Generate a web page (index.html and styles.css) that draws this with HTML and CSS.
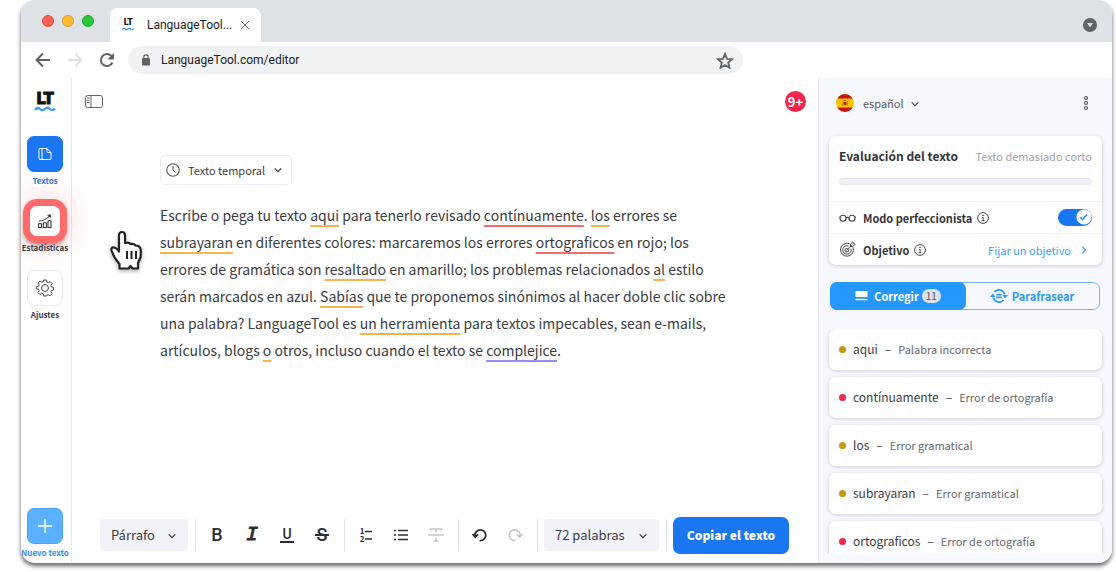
FILE: index.html
```html
<!DOCTYPE html>
<html lang="es">
<head>
<meta charset="utf-8">
<meta name="viewport" content="width=device-width, initial-scale=1">
<title>LanguageTool - Editor</title>
<link rel="stylesheet" href="styles.css">
</head>
<body>
<svg class="defs" aria-hidden="true">
  <symbol id="wave" viewBox="0 0 22 6"><path d="M1 4Q3.500.5 6 3T11 3 16 3 21 2.500" fill="none" stroke="#3b9dfd" stroke-width="2.400"/></symbol>
  <symbol id="chevron" viewBox="0 0 8 8"><path d="M.7 2.300 4 5.600 7.300 2.300" fill="none" stroke="currentColor" stroke-width="1.200"/></symbol>
  <symbol id="info" viewBox="0 0 12 12"><circle cx="6" cy="6" r="5.400" fill="none" stroke="currentColor" stroke-width=".9"/><circle cx="6" cy="3.500" r=".8" fill="currentColor"/><path d="M5 5.500h1.200v3M4.700 8.700h2.800" fill="none" stroke="currentColor" stroke-width=".9"/></symbol>
</svg>
<div class="window">
  <header class="tabbar">
    <div class="lights"><span class="light red"></span><span class="light amber"></span><span class="light green"></span></div>
    <div class="tab">
      <span class="logo small">LT<svg><use href="#wave"/></svg></span>
      <span class="tab-title">LanguageTool...</span>
      <button class="plain" aria-label="Cerrar pestaña"><svg width="10" height="10" viewBox="0 0 10 10"><path d="m1 1 8 8M9 1 1 9" fill="none" stroke="#5f6368"/></svg></button>
    </div>
    <button class="plain tab-search" aria-label="Buscar pestañas"><svg width="14" height="14" viewBox="0 0 14 14"><circle cx="7" cy="7" r="7" fill="#5f6368"/><path d="M4 5h6L7 9.500z" fill="#dee1e6"/></svg></button>
  </header>
  <nav class="navbar" aria-label="Navegador">
    <div class="nav-buttons">
      <button class="plain" aria-label="Atrás"><svg width="16" height="16" viewBox="0 0 16 16"><path d="M15 8H2M8 1.500 1.500 8 8 14.500" fill="none" stroke="#5f6368" stroke-width="2"/></svg></button>
      <button class="plain" aria-label="Adelante"><svg width="16" height="16" viewBox="0 0 16 16"><path d="M1 8h13M8 1.500 14.500 8 8 14.500" fill="none" stroke="#dfe1e5" stroke-width="2"/></svg></button>
      <button class="plain" aria-label="Recargar"><svg width="16" height="16" viewBox="0 0 16 16"><path d="M13.400 10.500A6 6 0 1 1 12.300 4l1.200 1.500" fill="none" stroke="#5f6368" stroke-width="2"/><path d="M15 1v6.500H8.500z" fill="#5f6368"/></svg></button>
    </div>
    <div class="address">
      <svg width="10" height="12" viewBox="0 0 10 12"><rect x="1" y="4" width="8" height="7.500" rx="1" fill="#5f6368"/><path d="M2.800 4.500V3a2.200 2.200 0 0 1 4.400 0v1.500" fill="none" stroke="#5f6368" stroke-width="1.200"/></svg>
      <input type="text" value="LanguageTool.com/editor" aria-label="Dirección">
      <button class="plain" aria-label="Guardar en favoritos"><svg width="18" height="17" viewBox="0 0 18 17"><path d="m9 1.800 2 5 5.200.4-4 3.400 1.300 5.200L9 13l-4.500 2.800 1.300-5.200-4-3.400 5.200-.4z" fill="none" stroke="#5f6368" stroke-width="1.800"/></svg></button>
    </div>
  </nav>
  <div class="app">
    <aside class="rail">
      <span class="logo">LT<svg><use href="#wave"/></svg></span>
      <button class="rail-item active"><span class="tile"><svg width="14" height="14" viewBox="0 0 14 14"><path d="M4 1.500H2a1 1 0 0 0-1 1v9a1 1 0 0 0 1 1h2zM4 1.500h5l4 4V11.500a1 1 0 0 1-1 1H4M9 1.500V4.500a1 1 0 0 0 1 1h3" fill="none" stroke="#fff" stroke-linejoin="round"/></svg></span>Textos</button>
      <button class="rail-item focus"><span class="tile"><svg width="14" height="14" viewBox="0 0 14 14"><path d="M.5 13.500v-3.500q1.500-1 3 0v3.500zM5.300 13.500V9q1.500-1 3 0v4.500zM10 13.500V7q1.500-1 3 0v6.500zM1 7q6 0 11-5.500M9.500 1.200l2.800-.2.200 2.600" fill="none" stroke="#333" stroke-width="1.100"/></svg></span>Estadísticas</button>
      <button class="rail-item"><span class="tile"><svg width="18" height="18" viewBox="0 0 18 18"><path d="M7.500 1h3l.4 2.200 1.400.6L14.100 2.500l2.100 2.100-1.400 1.900.6 1.400 2.100.4v2.700l-2.100.5-.6 1.400 1.300 1.900-2 2-1.900-1.200-1.400.6L10.500 17h-3l-.4-2.200-1.400-.6-1.800 1.300-2.100-2.100 1.400-1.900-.6-1.400L.6 9.800V7.700l2-.5.600-1.400L1.900 4l2-2 1.900 1.200 1.400-.6z" fill="none" stroke="#444" stroke-linejoin="round"/><circle cx="9" cy="9" r="3.400" fill="none" stroke="#444"/></svg></span>Ajustes</button>
      <button class="rail-item new"><span class="tile"><svg width="14" height="14" viewBox="0 0 14 14"><path d="M7 0v14M0 7h14" stroke="#fff" stroke-width="1.400"/></svg></span>Nuevo texto</button>
    </aside>
    <main class="editor">
      <div class="editor-top">
        <button class="plain" aria-label="Mostrar lista"><svg width="18" height="13" viewBox="0 0 18 13"><rect x=".5" y=".5" width="17" height="12" rx="2" fill="none" stroke="#666"/><path d="M6 .5v12M2 3h2.500M2 5.200h2.500M2 7.400h2.500" stroke="#666"/></svg></button>
        <span class="count">9+</span>
      </div>
      <div class="document">
        <button class="doc-type"><svg width="14" height="14" viewBox="0 0 14 14"><circle cx="7" cy="7" r="6.300" fill="none" stroke="#555" stroke-width="1.100"/><path d="M7 3v4l2.500 2.500" fill="none" stroke="#555"/></svg>Texto temporal<svg class="chev"><use href="#chevron"/></svg></button>
        <div class="text" contenteditable="true" role="textbox" aria-multiline="true" aria-label="Texto" spellcheck="false">Escribe o pega tu texto <u>aqui</u> para tenerlo revisado <u class="spell">contínuamente</u>. <u>los</u> errores se <br><u>subrayaran</u> en diferentes colores: marcaremos los errores <u class="spell">ortograficos</u> en rojo; los <br>errores de gramática son <u>resaltado</u> en amarillo; los problemas relacionados <u>al</u> estilo <br>serán marcados en azul. <u>Sabías</u> que te proponemos sinónimos al hacer doble clic sobre <br>una palabra? LanguageTool es <u>un herramienta</u> para textos impecables, sean e-mails, <br>artículos, blogs <u>o</u> otros, incluso cuando el texto se <u class="style">complejice</u>.</div>
      </div>
      <div class="toolbar" role="toolbar" aria-label="Formato">
        <span class="pick"><select aria-label="Estilo"><option>Párrafo</option></select><svg class="chev"><use href="#chevron"/></svg></span>
        <div class="group first">
          <button class="tool bold" aria-label="Negrita">B</button>
          <button class="tool italic" aria-label="Cursiva">I</button>
          <button class="tool under" aria-label="Subrayado"><span>U</span></button>
          <button class="tool strike" aria-label="Tachado"><span>S</span></button>
        </div>
        <div class="group">
          <button class="tool" aria-label="Lista numerada"><svg class="ordered" width="7" height="14" viewBox="0 0 7 14"><path d="M0 3.500h7M0 11h7" stroke="currentColor" stroke-width="1.600"/></svg></button>
          <button class="tool" aria-label="Lista"><svg width="14" height="14" viewBox="0 0 14 14"><path d="M4 2.500h10M4 7h10M4 11.500h10" stroke="currentColor" stroke-width="1.600"/><path d="M0 2.500h2M0 7h2M0 11.500h2" stroke="currentColor" stroke-width="1.600"/></svg></button>
          <button class="tool" disabled aria-label="Borrar formato"><svg width="16" height="16" viewBox="0 0 16 16"><path d="M0 8h16M2.500 3.500V2h11v1.500M8 2v3.500M8 10.500V14M5.500 14h5" fill="none" stroke="currentColor" stroke-width="1.600"/></svg></button>
        </div>
        <div class="group">
          <button class="tool" aria-label="Deshacer"><svg width="16" height="14" viewBox="0 0 16 14"><path d="M3 8a5.400 5.400 0 1 1 4.600 4.600" fill="none" stroke="currentColor" stroke-width="1.800"/><path d="m.5 6 2.700 3 3-2.700" fill="none" stroke="currentColor" stroke-width="1.800"/></svg></button>
          <button class="tool" disabled aria-label="Rehacer"><svg width="16" height="14" viewBox="0 0 16 14"><path d="M13 8a5.400 5.400 0 1 0-4.600 4.600M15.500 6l-2.700 3-3-2.700" fill="none" stroke="currentColor" stroke-width="1.600"/></svg></button>
        </div>
        <div class="group words"><span class="pick wide"><select aria-label="Recuento"><option>72 palabras</option></select><svg class="chev"><use href="#chevron"/></svg></span></div>
        <div class="group last"><button class="copy">Copiar el texto</button></div>
      </div>
    </main>
    <aside class="panel">
      <div class="panel-top">
        <svg class="flag" width="18" height="18" viewBox="0 0 18 18"><clipPath id="disc"><circle cx="9" cy="9" r="9"/></clipPath><g clip-path="url(#disc)"><path d="M0 0h18v18H0z" fill="#ffc400"/><path d="M0 0h18v4.500H0zM0 13.500h18V18H0z" fill="#c8141e"/></g><path d="M6.600 7h.9v4.500h-.9zM10.800 7h.9v4.500h-.9zM5.500 10.500h1v1h-1z" fill="#a8702c"/><path d="M7.600 8h3v2.500q-1.500 2-3 0z" fill="#a8421f"/><path d="M8 6.300h2.200v1H8z" fill="#8a5a18"/></svg>
        <span class="lang"><select aria-label="Idioma"><option>español</option></select><svg class="chev"><use href="#chevron"/></svg></span>
        <button class="plain more" aria-label="Más opciones"><svg width="6" height="16" viewBox="0 0 6 16"><g fill="none" stroke="#555" stroke-width="1.200"><circle cx="3" cy="3" r="1.500"/><circle cx="3" cy="8" r="1.500"/><circle cx="3" cy="13" r="1.500"/></g></svg></button>
      </div>
      <section class="score">
        <div class="score-head">
          <div class="score-title"><h2>Evaluación del texto</h2><span>Texto demasiado corto</span></div>
          <progress value="0" max="100" aria-label="Evaluación"></progress>
        </div>
        <div class="row">
          <svg width="17" height="8" viewBox="0 0 17 8"><g fill="none" stroke="#444" stroke-width="1.100"><circle cx="4" cy="4.300" r="3"/><circle cx="13" cy="4.300" r="3"/><path d="M7 4q1.500-1.300 3 0M0 3.300h1M16 3.300h1"/></g></svg>
          <label for="picky">Modo perfeccionista</label><svg class="info"><use href="#info"/></svg>
          <span class="switch"><input id="picky" type="checkbox" checked><svg width="9" height="8" viewBox="0 0 9 8"><path d="m1 4 2.500 2.500L8 1.500" fill="none" stroke="#2f93fb" stroke-width="1.600"/></svg></span>
        </div>
        <div class="row">
          <svg width="17" height="17" viewBox="0 0 17 17"><g fill="none" stroke="#444"><path d="M10.500 2.700A6.500 6.500 0 1 0 14 6.300"/><path d="M9.500 5A4.200 4.200 0 1 0 11.900 7.500"/><path d="M8.500 7.500a1.800 1.800 0 1 0 1 1"/><path d="m7.700 9.200 5.500-5.500M11.500 5.400V3L13.800.8l.5 1.800 1.900.5-2.300 2.300z"/></g></svg>
          <strong>Objetivo</strong><svg class="info"><use href="#info"/></svg>
          <a class="goal" href="#objetivo">Fijar un objetivo<svg class="chev right"><use href="#chevron"/></svg></a>
        </div>
      </section>
      <div class="modes">
        <button class="mode on"><svg width="13" height="10" viewBox="0 0 12 10"><path d="M0 0h12v6H0zM0 7.800h12V9.200H0z" fill="#fff"/></svg>Corregir<span class="badge">11</span></button>
        <button class="mode"><svg width="18" height="14" viewBox="0 0 18 14"><g fill="none" stroke="currentColor" stroke-width="1.600"><path d="M3.300 8.500A5.900 5.900 0 0 0 13.500 11M14.700 5.500A5.900 5.900 0 0 0 4.500 3"/><path d="M6.300 5.600h5.400M6.300 8.400h5.400"/></g><path d="M0 8h5.600L2.800 4.600zM12.400 6H18l-2.800 3.400z" fill="currentColor"/></svg>Parafrasear</button>
      </div>
      <ul class="issues">
        <li><button class="issue"><i class="dot"></i><b>aqui</b><b>–</b><span>Palabra incorrecta</span></button></li>
        <li><button class="issue"><i class="dot bad"></i><b>contínuamente</b><b>–</b><span>Error de ortografía</span></button></li>
        <li><button class="issue"><i class="dot"></i><b>los</b><b>–</b><span>Error gramatical</span></button></li>
        <li><button class="issue"><i class="dot"></i><b>subrayaran</b><b>–</b><span>Error gramatical</span></button></li>
        <li><button class="issue"><i class="dot bad"></i><b>ortograficos</b><b>–</b><span>Error de ortografía</span></button></li>
      </ul>
    </aside>
  </div>
</div>
<svg class="hand" width="36" height="42" viewBox="0 0 36 42" aria-hidden="true"><path d="M10 5.500q0-3.500 3-3.500t3 3.500V13q4-1 5.500 1 3.500-.5 5 1.500 3.500 0 4.800 2.500 1 3 .2 9.500l-2.500 5.500v5.500h-5.500l-2-2.500-2 2.500h-9V34Q5 28 2.500 20.500 2 17 5 17.500q3 .5 5 4z" fill="#fff" stroke="#222" stroke-width="2.200" stroke-linejoin="round"/><path d="M18 21v8M22.500 21v8M27 21v8" stroke="#222" stroke-width="2"/></svg>
</body>
</html>
```
FILE: styles.css
```css
* { box-sizing: border-box; }
body {
  margin: 0;
  background: #fff;
  color: #3a3c42;
  font: 13px/16px "Noto Sans CJK SC", "Noto Sans", sans-serif;
}
button, select, input { font: inherit; color: inherit; }
button { cursor: pointer; }
svg { display: block; flex: none; }
.defs { position: absolute; width: 0; height: 0; }
.plain { padding: 0; border: 0; background: none; }
.chev { width: 8px; height: 8px; }
.right { transform: rotate(-90deg); }

.window {
  display: flex;
  flex-direction: column;
  height: calc(100vh - 9px);
  min-height: 500px;
  margin: 0 4px 9px 21px;
  overflow: hidden;
  border-radius: 14px;
  background: #fff;
  box-shadow: 0 3px 4px rgba(0, 0, 0, .6);
}
.tabbar {
  display: flex;
  align-items: center;
  height: 42px;
  padding: 8px 15px 0 21px;
  background: #dee1e6;
  font: 12px/16px Roboto, sans-serif;
}
.lights { display: flex; gap: 8px; margin-bottom: 8px; }
.light { width: 12px; height: 12px; border: 1px solid; border-radius: 50%; }
.red { background: #fe5f57; border-color: #e2463f; }
.amber { background: #febb2d; border-color: #dfa023; }
.green { background: #27c840; border-color: #1dac2b; }
.tab {
  display: flex;
  align-items: center;
  align-self: stretch;
  gap: 13px;
  width: 151px;
  margin-left: 16px;
  padding: 0 11px 0 12px;
  border-radius: 8px 8px 0 0;
  background: #fff;
  color: #202124;
}
.tab-title { flex: 1; min-width: 0; white-space: nowrap; }
.tab .plain { margin-left: -6px; }
.tab-search { margin: 0 0 0 auto; }
.logo {
  display: flex;
  flex-direction: column;
  align-items: center;
  color: #111;
  font: 700 15px/13px "DejaVu Sans", sans-serif;
  -webkit-text-stroke: 1px #111;
}
.logo svg { width: 22px; height: 6px; }
.small { font-size: 8px; line-height: 8px; -webkit-text-stroke: 0; }
.small svg { width: 12px; height: 4px; }

.navbar { display: flex; align-items: center; height: 36px; padding-left: 14px; }
.nav-buttons { display: flex; gap: 16px; width: 93px; }
.address {
  display: flex;
  align-items: center;
  flex: 0 1 615px;
  height: 28px;
  padding: 0 9px 0 13px;
  border-radius: 14px;
  background: #f1f2f4;
}
.address input {
  flex: 1;
  min-width: 0;
  padding: 0 10px;
  border: 0;
  background: none;
  color: #202124;
  font: 12px/16px Roboto, sans-serif;
}

.app { display: flex; flex: 1; min-height: 0; }
.rail {
  display: flex;
  flex-direction: column;
  align-items: center;
  flex: none;
  width: 51px;
  padding: 14px 2px 4px 0;
  border-right: 1px solid #e8e9ee;
}
.rail .logo { margin: 1px 0 24px; }
.rail-item {
  display: flex;
  flex-direction: column;
  align-items: center;
  gap: 3px;
  width: 100%;
  height: 51px;
  margin-bottom: 16px;
  padding: 0;
  border: 0;
  background: none;
  font-size: 8px;
  font-weight: 700;
  line-height: 12px;
  white-space: nowrap;
}
.tile {
  display: grid;
  place-items: center;
  width: 36px;
  height: 36px;
  border: 1px solid #e9eaf4;
  border-radius: 7px;
  background: #fff;
}
.active { color: #1b76f2; }
.active .tile { background: #1b76f2; border-color: #1b76f2; }
.focus .tile {
  border: 3px solid #ff6b6b;
  border-radius: 10px;
  box-shadow: 0 0 0 4px #ff6b6b, 0 4px 4px 3px rgba(90, 20, 20, .4), 0 0 24px 10px rgba(255, 107, 107, .2);
}
.new { margin: auto 0 0; color: #2f8ef5; }
.new .tile { background: #5bb1ff; border-color: #4ca4f6; }

.editor { display: flex; flex-direction: column; flex: 1; min-width: 0; }
.editor-top {
  display: flex;
  align-items: center;
  justify-content: space-between;
  padding: 13px 12px 0 13px;
}
.count {
  width: 21px;
  height: 21px;
  border-radius: 50%;
  background: #f5254f;
  color: #fff;
  font-weight: 700;
  line-height: 21px;
  text-align: center;
}
.document { flex: 1; padding: 43px 24px 0 88px; }
.doc-type {
  display: flex;
  align-items: center;
  gap: 8px;
  height: 30px;
  padding: 0 9px 0 5px;
  border: 1px solid #e9eaf4;
  border-radius: 5px;
  background: #fff;
  font-size: 11px;
}
.doc-type .chev { margin-left: 1px; }
.text { margin-top: 17px; outline: 0; font-size: 14px; line-height: 27px; white-space: nowrap; }
.text u { text-decoration: underline 2px #f9b44c; text-decoration-skip-ink: none; text-underline-offset: 4px; }
.text .spell { text-decoration-color: #f36a6f; }
.text .style { text-decoration-color: #968bf2; }

.toolbar { display: flex; align-items: center; justify-content: center; margin: 0 1px 12px 0; }
.pick { position: relative; width: 88px; }
.wide { width: 115px; }
.pick select, .lang select { display: block; width: 100%; appearance: none; border: 0; outline: 0; }
.pick select { height: 32px; padding: 0 11px 1px; border-radius: 4px; background: #f2f3f9; }
.pick .chev { position: absolute; top: 13px; right: 12px; pointer-events: none; }
.group { display: flex; align-items: center; gap: 11px; height: 32px; margin-left: 6px; padding: 0 4px 0 9px; border-left: 1px solid #dde4ef; }
.first { margin-left: 7px; }
.words { padding: 0 0 0 6px; }
.last { margin-left: 7px; padding: 0 0 0 6px; }
.tool {
  display: flex;
  align-items: center;
  justify-content: center;
  width: 24px;
  height: 24px;
  padding: 0;
  border: 0;
  background: none;
  color: #2d2f36;
}
.tool:disabled { color: #c5c6ca; }
.bold { font: 500 18px/24px Roboto, sans-serif; }
.italic { font: italic 400 20px/24px "Liberation Mono", monospace; -webkit-text-stroke: 1px; }
.under span { padding: 0 2px; border-bottom: 2px solid; font: 500 14px/14px Roboto, sans-serif; }
.strike { font: 500 18px/24px Roboto, sans-serif; }
.strike span { padding: 0 2px; background: linear-gradient(currentColor, currentColor) 0 50% / 100% 2px no-repeat; }
.ordered { margin-left: 1px; }
.tool:has(.ordered)::before { content: "1\A 2"; white-space: pre; font-size: 8px; font-weight: 700; line-height: 8px; }
.copy {
  width: 116px;
  height: 37px;
  padding: 0;
  border: 0;
  border-radius: 7px;
  background: #1b76f2;
  color: #fff;
  font-size: 12px;
  font-weight: 900;
  white-space: nowrap;
}

.panel {
  display: flex;
  flex-direction: column;
  flex: 0 0 294px;
  padding: 0 10px 9px;
  border-left: 1px solid #e8eaf2;
  background: #f7f8fd;
}
.panel-top { display: flex; align-items: center; height: 50px; margin-bottom: 8px; padding: 0 13px 0 7px; color: #55575c; font-size: 11px; }
.lang { position: relative; width: 56px; margin-left: 9px; }
.lang select { padding: 0 0 1px; background: none; }
.lang .chev { position: absolute; top: 5px; right: 0; pointer-events: none; }
.more { margin-left: auto; }
.score, .issue { border-radius: 7px; background: #fff; box-shadow: 0 1px 4px rgba(40, 45, 70, .2); }
.score { flex: none; color: #33353b; }
.score-head { height: 65px; padding: 11px 10px 0; }
.score-title { display: flex; align-items: center; justify-content: space-between; height: 18px; white-space: nowrap; }
.score-title span { color: #a0a2a8; font-size: 11px; }
h2 { margin: 0; font-size: 12px; font-weight: 700; }
progress { display: block; width: 100%; height: 7px; margin-top: 13px; appearance: none; border: 0; border-radius: 4px; }
progress::-webkit-progress-bar { border: 1px solid #e3e6ec; border-radius: 4px; background: #eff1f5; }
.row { display: flex; align-items: center; height: 32px; padding: 0 10px; border-top: 1px solid #f2f3f7; font-size: 11px; white-space: nowrap; }
.row label, .row strong { margin: 0 5px 0 7px; font-weight: 700; }
.info { width: 12px; height: 12px; }
.switch { position: relative; margin-left: auto; }
.switch input { display: block; width: 34px; height: 17px; margin: 0; appearance: none; border-radius: 9px; background: radial-gradient(circle at 26px 8px, #fff 7px, #1b76f2 8px); }
.switch svg { position: absolute; top: 4px; right: 4px; pointer-events: none; }
.goal { display: flex; align-items: center; gap: 9px; margin-left: auto; padding-right: 4px; color: #3b9cfb; text-decoration: none; }
.modes { display: flex; flex: none; height: 28px; margin: 17px 2px 19px 1px; border: 1px solid #72b8fb; border-radius: 7px; }
.mode {
  display: flex;
  align-items: center;
  justify-content: center;
  gap: 4px;
  flex: 1;
  margin: -1px;
  padding: 0;
  border: 0;
  border-radius: 7px;
  background: none;
  color: #2597ff;
  font-size: 11px;
  font-weight: 700;
}
.on { gap: 6px; background: #2597ff; color: #fff; }
.badge { padding: 0 4px; border-radius: 7px; margin-left: -3px; background: #dde2e8; color: #555; font-size: 10px; font-weight: 400; line-height: 14px; }
.issues { flex: 1; min-height: 0; margin: 0 -6px; padding: 0 6px; overflow: hidden; list-style: none; }
.issues li { margin-bottom: 7px; }
.issue { display: flex; align-items: center; width: 100%; height: 41px; padding: 0 10px 1px; border: 0; white-space: nowrap; }
.issue b { margin-right: 7px; font-size: 12px; font-weight: 400; }
.issue span { color: #66686e; font-size: 11px; }
.dot { width: 7px; height: 7px; margin-right: 7px; border-radius: 50%; background: #c7980c; }
.bad { background: #f5254f; }
.hand { position: absolute; top: 230px; left: 109px; filter: drop-shadow(0 2px 2px rgba(0, 0, 0, .3)); }
```
